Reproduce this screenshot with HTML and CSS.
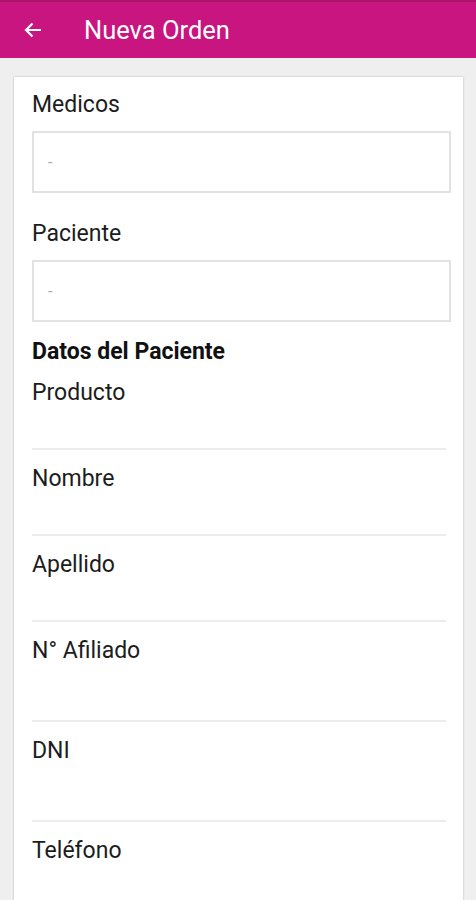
FILE: index.html
```html
<!DOCTYPE html>
<html lang="es">
<head>
    <meta charset="UTF-8">
    <meta name="viewport" content="width=device-width, initial-scale=1.0">
    <title>Nueva Orden</title>
    <link rel="stylesheet" href="styles.css">
</head>
<body>

    <div class="topbar">
        <span class="back">
            <svg width="18" height="16" viewBox="0 0 18 16">
                <path d="M17 8H2M8.5 1.5L2 8l6.5 6.5" fill="none" stroke="#fff" stroke-width="2.2"/>
            </svg>
        </span>
        <span class="title">Nueva Orden</span>
    </div>

    <div class="card">
        <label class="label">Medicos</label>
        <div class="select">-</div>

        <label class="label second">Paciente</label>
        <div class="select">-</div>

        <h3 class="section">Datos del Paciente</h3>

        <div class="field first">
            <label class="label">Producto</label>
        </div>
        <div class="field">
            <label class="label">Nombre</label>
        </div>
        <div class="field">
            <label class="label">Apellido</label>
        </div>
        <div class="field tall">
            <label class="label">N° Afiliado</label>
        </div>
        <div class="field tall">
            <label class="label">DNI</label>
        </div>
        <div class="field last">
            <label class="label">Teléfono</label>
        </div>
    </div>

</body>
</html>
```

FILE: styles.css
```css
body {
    margin: 0;
    font-family: Roboto, 'Liberation Sans', sans-serif;
    background-color: #efefef;
    color: #1c1c1c;
}

.topbar {
    height: 56px;
    background-color: #c8157f;
    border-top: 2px solid #a8156d;
    display: flex;
    align-items: center;
    color: #fff;
}
.back {
    width: 84px;
    padding-left: 24px;
    box-sizing: border-box;
    display: flex;
    align-items: center;
}
.title {
    font-size: 25.5px;
}

.card {
    background: #fff;
    margin: 19px 13px 0 14px;
    padding: 15px 12px 33px 18px;
    box-shadow: 0 0 2px rgba(0, 0, 0, 0.25);
}

.label {
    display: block;
    font-size: 23px;
    line-height: 26px;
}
.label.second {
    margin-top: 28px;
}

.select {
    margin-top: 13px;
    height: 58px;
    border: 2px solid #e2e2e2;
    padding-left: 14px;
    display: flex;
    align-items: center;
    color: #aaa;
    font-size: 16px;
}

.section {
    margin: 17px 0 0;
    font-size: 23px;
    line-height: 26px;
    font-weight: bold;
    color: #111;
}

.field {
    padding-top: 16px;
    padding-bottom: 42px;
    margin-right: 5px;
    border-bottom: 2px solid #ececec;
}
.field.first {
    padding-top: 15px;
}
.field.tall {
    padding-bottom: 56px;
}
.field.last {
    border-bottom: none;
}
```
